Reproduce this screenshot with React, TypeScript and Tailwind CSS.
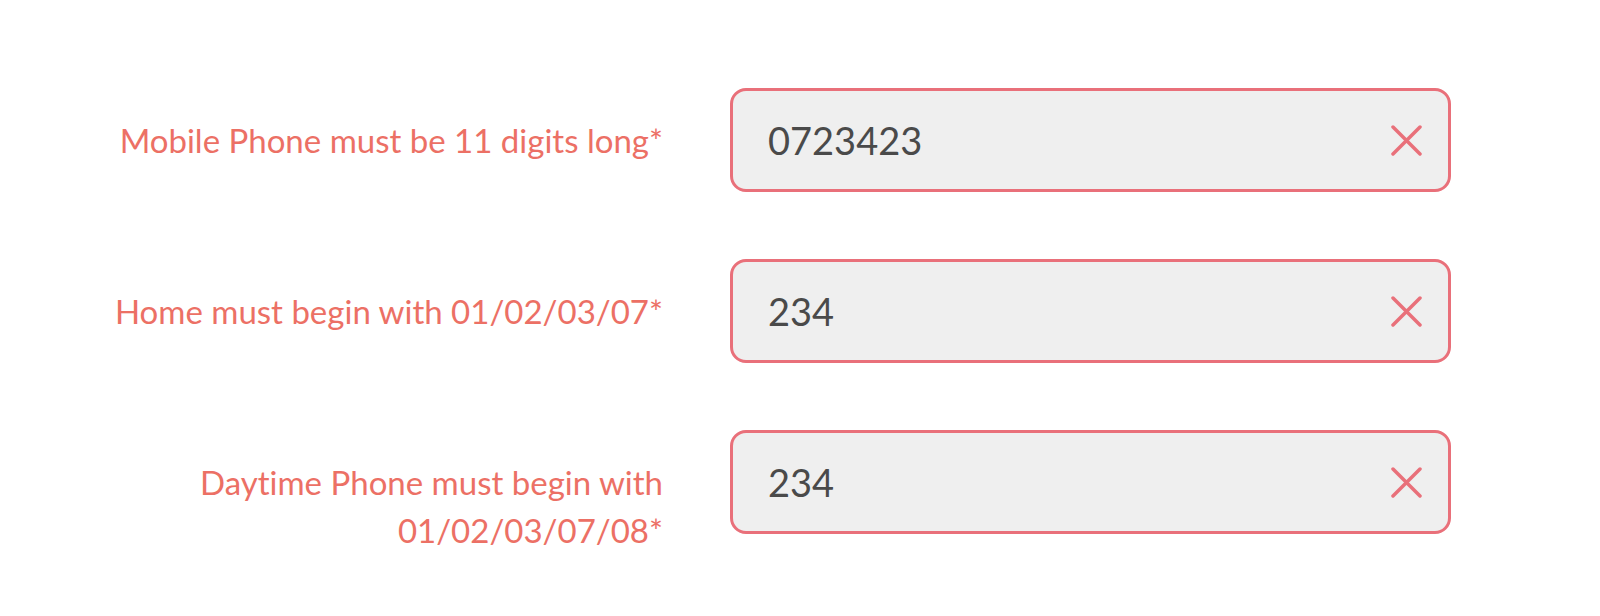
const rows = [
  { label: 'Mobile Phone must be 11 digits long*', value: '0723423' },
  { label: 'Home must begin with 01/02/03/07*', value: '234' },
  { label: 'Daytime Phone must begin with 01/02/03/07/08*', value: '234' },
];

function ClearIcon() {
  return (
    <svg width="31" height="31" viewBox="0 0 31 31" fill="none" className="shrink-0">
      <path d="M2 2L29 29M29 2L2 29" stroke="#e9707a" strokeWidth="3.5" strokeLinecap="round" />
    </svg>
  );
}

export default function App() {
  return (
    <div className="w-[1600px] h-[616px] bg-white font-['Lato','Liberation_Sans',sans-serif] [font-variant-ligatures:none]">
      <div className="pl-[100px] pt-[88px] grid grid-cols-[563px_721px] gap-x-[67px] gap-y-[67px]">
        {rows.map((row) => (
          <div key={row.label} className="contents">
            <p className="pt-[28px] text-right text-[33px] leading-[48px] text-[#ec7065]">
              {row.label}
            </p>
            <div className="h-[104px] flex items-center rounded-[16px] border-[3px] border-[#e9707a] bg-[#efefef] pl-[35px] pr-[26px]">
              <span className="flex-1 text-[38px] text-[#4a4a4a]">{row.value}</span>
              <ClearIcon />
            </div>
          </div>
        ))}
      </div>
    </div>
  );
}
